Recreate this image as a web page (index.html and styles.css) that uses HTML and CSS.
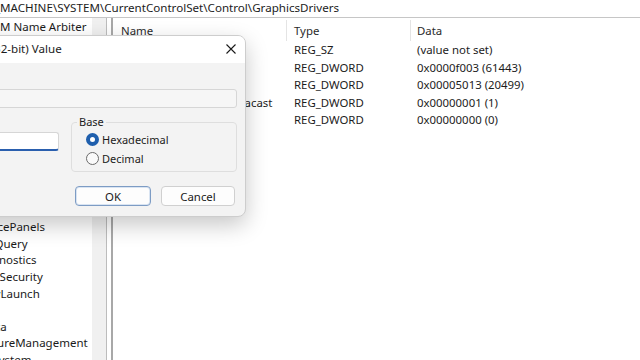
FILE: index.html
```html
<!DOCTYPE html>
<html lang="en">
<head>
    <meta charset="UTF-8">
    <meta name="viewport" content="width=device-width, initial-scale=1.0">
    <title>Registry Editor</title>
    <link rel="stylesheet" href="styles.css">
</head>
<body>
    <div class="window">
        <div class="address">
            <span class="path">Computer\HKEY_LOCAL_MACHINE\SYSTEM\CurrentControlSet\Control\GraphicsDrivers</span>
        </div>

        <div class="panes">
            <div class="tree">
                <ul class="keys">
                    <li class="first">COM Name Arbiter</li>
                    <li>CommonGlobUserSettings</li>
                    <li>Compatibility</li>
                    <li>ComputerName</li>
                    <li>ContentIndex</li>
                    <li>CrashControl</li>
                    <li>Cryptography</li>
                    <li>DeviceClasses</li>
                    <li>DeviceContainers</li>
                    <li>DeviceGuard</li>
                    <li>DeviceMigration</li>
                    <li>DeviceOverrides</li>
                    <li>DevicePanels</li>
                    <li>DevQuery</li>
                    <li>Diagnostics</li>
                    <li>DmaSecurity</li>
                    <li>EarlyLaunch</li>
                    <li>Els</li>
                    <li>Errata</li>
                    <li>FeatureManagement</li>
                    <li>FileSystem</li>
                </ul>
            </div>
            <div class="track"></div>
            <div class="splitter"></div>

            <div class="values">
                <div class="row head">
                    <span class="col name">Name</span>
                    <span class="col type">Type</span>
                    <span class="col data">Data</span>
                </div>
                <div class="row">
                    <span class="col name"><span class="vicon sz">ab</span>(Default)</span>
                    <span class="col type">REG_SZ</span>
                    <span class="col data">(value not set)</span>
                </div>
                <div class="row">
                    <span class="col name"><span class="vicon">01</span>DxgKrnlVersion</span>
                    <span class="col type">REG_DWORD</span>
                    <span class="col data">0x0000f003 (61443)</span>
                </div>
                <div class="row">
                    <span class="col name"><span class="vicon">01</span>HwSchMode</span>
                    <span class="col type">REG_DWORD</span>
                    <span class="col data">0x00005013 (20499)</span>
                </div>
                <div class="row">
                    <span class="col name"><span class="vicon">01</span>DisableOverlaysMiracast</span>
                    <span class="col type">REG_DWORD</span>
                    <span class="col data">0x00000001 (1)</span>
                </div>
                <div class="row">
                    <span class="col name"><span class="vicon">01</span>TdrLevel</span>
                    <span class="col type">REG_DWORD</span>
                    <span class="col data">0x00000000 (0)</span>
                </div>
            </div>
        </div>

        <div class="dialog">
            <div class="titlebar">
                <span class="title">Edit DWORD (32-bit) Value</span>
                <button class="close">
                    <svg width="10" height="10" viewBox="0 0 10 10">
                        <path d="M0.5 0.5 L9.5 9.5 M9.5 0.5 L0.5 9.5" stroke="#1a1a1a" stroke-width="1.1" fill="none"/>
                    </svg>
                </button>
            </div>
            <div class="dialog-body">
                <label class="field-label">Value name:</label>
                <input class="field disabled" type="text" value="TdrLevel" disabled>

                <div class="data-row">
                    <div class="data-col">
                        <label class="field-label">Value data:</label>
                        <input class="field focused" type="text" value="0">
                    </div>
                    <fieldset class="base">
                        <legend>Base</legend>
                        <label class="radio"><input type="radio" name="base" checked> Hexadecimal</label>
                        <label class="radio"><input type="radio" name="base"> Decimal</label>
                    </fieldset>
                </div>

                <div class="buttons">
                    <button class="btn primary">OK</button>
                    <button class="btn">Cancel</button>
                </div>
            </div>
        </div>
    </div>
</body>
</html>
```

FILE: styles.css
```css
body {
    margin: 0;
    font-family: "Noto Sans", "Open Sans", sans-serif;
    color: #1c1c1c;
    background-color: #ffffff;
}

.window {
    position: relative;
    width: 640px;
    height: 360px;
    overflow: hidden;
    display: flex;
    flex-direction: column;
}

.address {
    height: 17px;
    line-height: 16px;
    font-size: 11.6px;
    white-space: nowrap;
    overflow: hidden;
    border-bottom: 1px solid #c6c6c6;
}

.path {
    display: inline-block;
    margin-left: -134px;
}

.panes {
    flex: 1;
    display: flex;
    min-height: 0;
}

.tree {
    width: 92px;
    overflow: hidden;
    padding-top: 1px;
}

.keys {
    list-style: none;
    margin: 0 0 0 -26px;
    padding: 0;
    font-size: 11.5px;
    color: #1a1a1a;
}

.keys li {
    height: 16.67px;
    line-height: 16.67px;
    white-space: nowrap;
}

.keys .first {
    padding-left: 10px;
}

.track {
    width: 14px;
    background-color: #f0f0f0;
    border-right: 1px solid #bcbcbc;
}

.splitter {
    width: 4px;
    border-right: 2px solid #a8a8a8;
}

.values {
    flex: 1;
    font-size: 11.4px;
}

.row {
    display: flex;
    height: 17.5px;
    line-height: 17.5px;
    white-space: nowrap;
}

.row.head {
    height: 23px;
    line-height: 21px;
    padding-top: 2px;
    box-sizing: border-box;
    color: #2a2a2a;
}

.col {
    box-sizing: border-box;
    overflow: hidden;
}

.col.name {
    width: 174px;
    padding-left: 8px;
    display: flex;
    align-items: center;
    overflow: visible;
}

.col.type {
    width: 124px;
    padding-left: 7px;
}

.col.data {
    flex: 1;
    padding-left: 6px;
}

.row.head .col.name,
.row.head .col.type {
    border-right: 1px solid #e4e4e4;
}

.vicon {
    width: 16px;
    margin-right: 4px;
    font-size: 8px;
    color: #2f6fc0;
    text-align: center;
}

.vicon.sz {
    color: #c0392b;
}

/* dialog */

.dialog {
    position: absolute;
    left: -118px;
    top: 35px;
    width: 364px;
    height: 182px;
    box-sizing: border-box;
    border: 1px solid #cdcdcd;
    border-radius: 8px;
    background-color: #f3f3f3;
    box-shadow: 0 8px 22px rgba(0, 0, 0, 0.22);
    overflow: hidden;
    display: flex;
    flex-direction: column;
}

.titlebar {
    height: 27px;
    display: flex;
    align-items: center;
    padding: 0 0 2px 37px;
    box-sizing: border-box;
    background-color: #ffffff;
    font-size: 11.6px;
    white-space: nowrap;
}

.close {
    margin-left: auto;
    width: 28px;
    height: 24px;
    border: none;
    padding: 0;
    background: none;
    display: flex;
    align-items: center;
    justify-content: center;
}

.dialog-body {
    flex: 1;
    display: flex;
    flex-direction: column;
    padding: 8px 8px 10px 12px;
    font-size: 11px;
}

.field-label {
    display: block;
    line-height: 16px;
    margin-bottom: 2px;
}

.field {
    display: block;
    box-sizing: border-box;
    height: 19px;
    margin: 0;
    padding: 0 6px;
    font: inherit;
    border: 1px solid #d6d6d6;
    border-radius: 3px;
    outline: none;
}

.field.disabled {
    width: 100%;
    background-color: #f6f6f6;
    color: #8a8a8a;
}

.field.focused {
    width: 164px;
    background-color: #ffffff;
    border-bottom: 2px solid #2a5fae;
}

.data-row {
    display: flex;
    gap: 12px;
    margin-top: 6px;
}

.data-col {
    width: 164px;
}

.base {
    flex: 1;
    margin: 0;
    padding: 0 14px 3px;
    border: 1px solid #dedede;
    border-radius: 4px;
}

.base legend {
    padding: 0 2px;
    margin-left: -9px;
    line-height: 16px;
}

.radio {
    display: flex;
    align-items: center;
    gap: 3px;
    height: 19px;
}

.radio input {
    appearance: none;
    width: 13px;
    height: 13px;
    margin: 0;
    box-sizing: border-box;
    border: 1px solid #6b6b6b;
    border-radius: 50%;
    background-color: #fafafa;
}

.radio input:checked {
    border: 4px solid #1f5fad;
    background-color: #ffffff;
}

.buttons {
    margin-top: auto;
    margin-right: 2px;
    display: flex;
    justify-content: flex-end;
    gap: 10px;
}

.btn {
    width: 74px;
    height: 20px;
    padding: 0;
    font: inherit;
    font-size: 11.4px;
    color: #1a1a1a;
    background-color: #fdfdfd;
    border: 1px solid #d0d0d0;
    border-radius: 4px;
}

.btn.primary {
    width: 76px;
    border-color: #7d9cc4;
    box-shadow: inset 0 0 0 1px #d9e4f2;
}
```
